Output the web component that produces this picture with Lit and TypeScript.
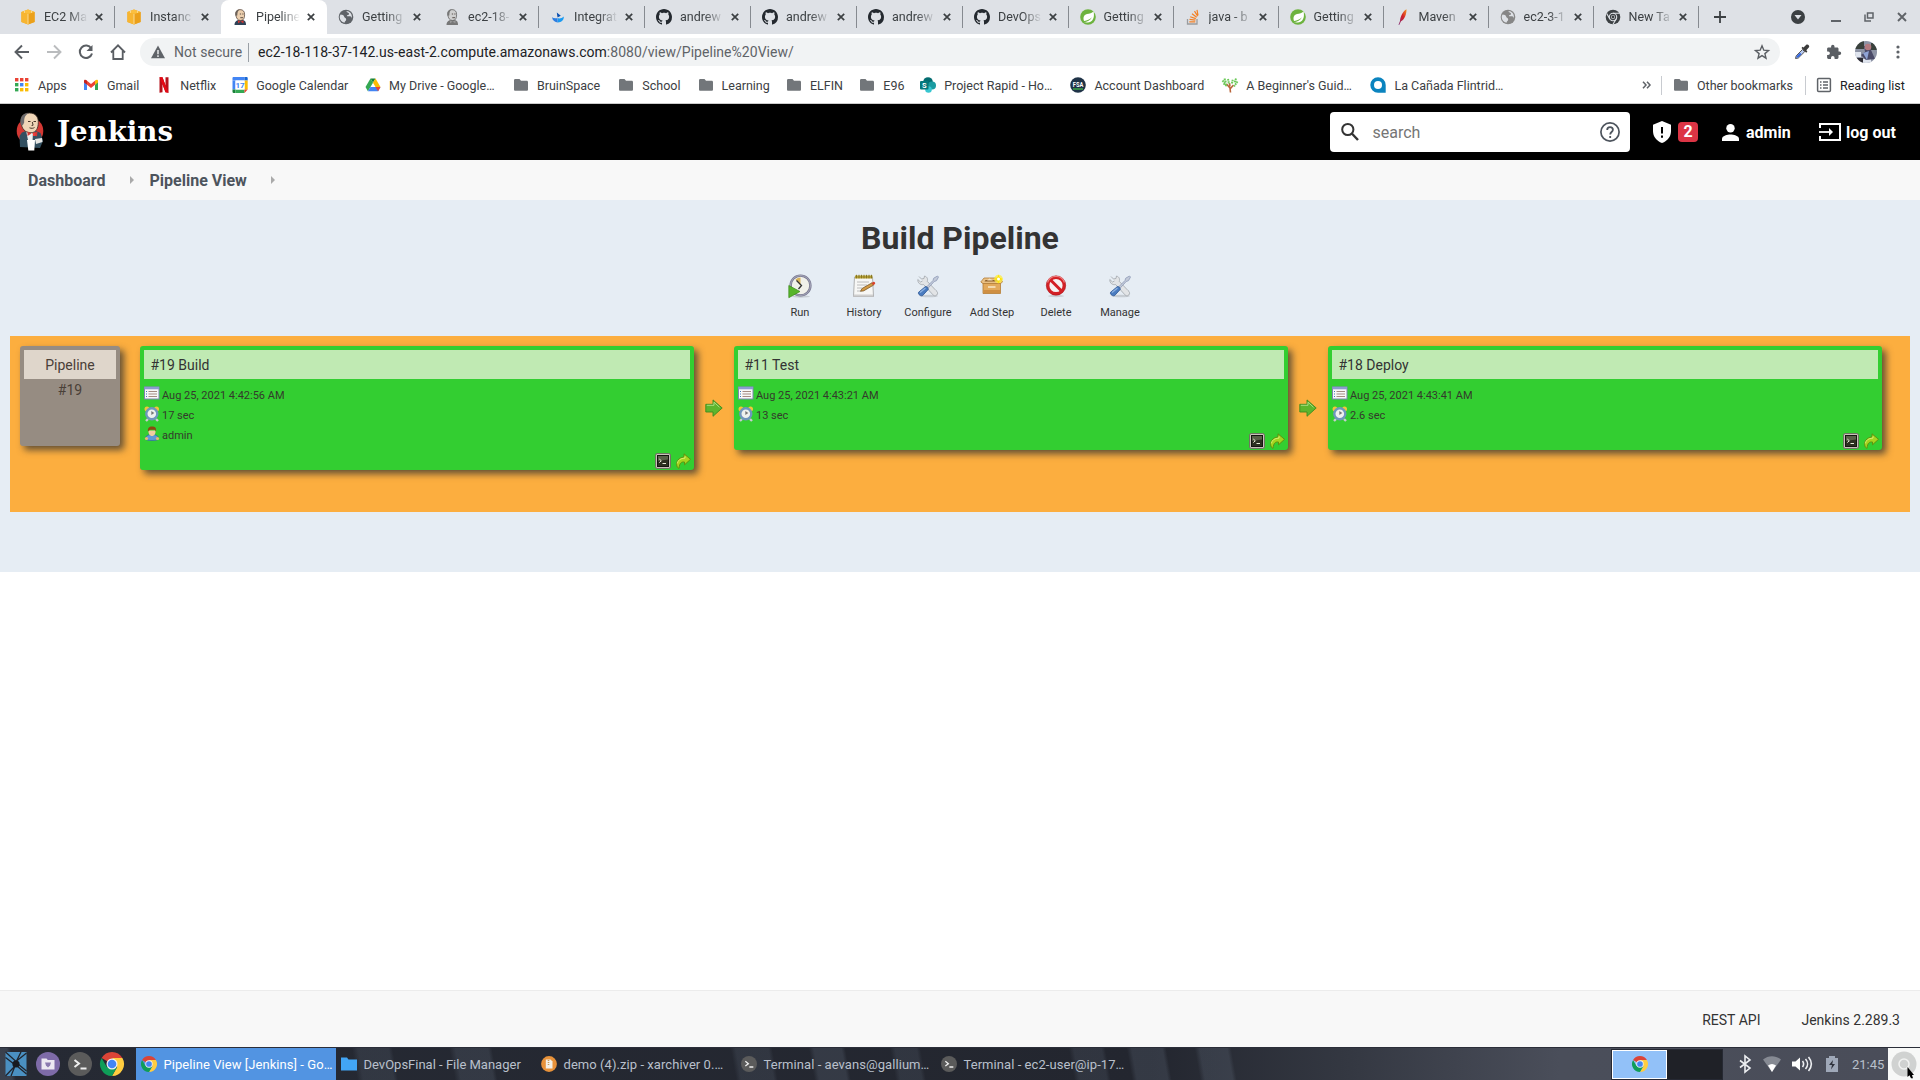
import { LitElement, html, svg, css, nothing } from "lit";
import { customElement } from "lit/decorators.js";
import { styleMap } from "lit/directives/style-map.js";

const icon = (w: number, h: number, body: unknown, vb = `0 0 ${w} ${h}`) =>
  html`<svg class="ico" width=${w} height=${h} viewBox=${vb}>${body}</svg>`;

/* ---------- shared glyphs ---------- */
const aws = () => icon(16, 16, svg`
  <path d="M8 .5 14.6 3v10L8 15.5 1.4 13V3z" fill="#f0a722"/>
  <path d="M1.4 3 8 5v10.5L1.4 13z" fill="#f7b531"/><path d="M14.6 3 8 5v10.5l6.600-2.500z" fill="#eba01a"/>
  <path d="M8 .5 14.600 3 8 5 1.400 3z" fill="#fbbf3f"/><path d="M8 5v10.500" stroke="#fbe0a0" stroke-width=".9"/>
  <path d="M4.500 1.900v2" stroke="#fbe0a0" stroke-width=".8"/><path d="M11.500 1.900v2" stroke="#fbe0a0" stroke-width=".8"/>`);

const butler = (gray = false) => icon(16, 16, svg`
  <path d="M2.500 16c0-2 .5-4 3.500-5l5 0c2.500.8 3 2.500 3 5z" fill=${gray ? "#777" : "#2f4256"}/>
  <path d="M3.800 6C3.300 2.500 5 .6 8 .6c3.200 0 4.800 2 4.600 5.200-.1 3-.8 5.700-3.900 5.700C5.500 11.500 4.300 9 3.800 6z" fill=${gray ? "#cfcfcf" : "#eccfae"} stroke=${gray ? "#555" : "#4a3b33"} stroke-width=".7"/>
  <path d="M3.600 6.800C2.800 3 4.300.6 7.800.5 5.800 1.800 5.300 3.500 5.300 6.500z" fill=${gray ? "#777" : "#6c625a"}/>
  <path d="M7.800 5h1.300M10.300 5h1.200M8.300 8.700h2.700" stroke="#3a302b" stroke-width=".8"/>
  <path d="m6 11.300 2.500 1.500-2.500 1.500zM11.500 11.300 8.500 12.800l3 1.500z" fill=${gray ? "#999" : "#d33833"}/>`);

const globe = (c = "#5f6368") => icon(16, 16, svg`
  <circle cx="8" cy="8" r="7.300" fill=${c}/>
  <path d="M2.600 5.500c2 .2 3.200.7 3.600 2.300.4 1.300 2 1 2 2.600 0 1.500-1.500 1.500-1.700 3.300-2.800-.6-4.800-3-4.800-5.700 0-.9.3-1.800.9-2.500zM8.500 2c0 1.700 2.500 1.200 2.500 2.900 0 1.300-2 .8-2.200 2 .8 1 3.200-.2 4.400 1.100.5.600.5 1.500.2 2.300.8-1.900.7-4.400-.8-6.200A6 6 0 0 0 8.500 2z" fill="#dee1e6"/>`);

const swallow = () => icon(16, 16, svg`
  <path d="M2 8.200c1.500 1.200 3.500 1.500 5.500.8L7.800 13.500C5 13.300 2.500 11.500 2 8.200z" fill="#2d7de0"/>
  <path d="M7.800 9.300c2 .5 4.500-.2 6-1.800.2 3.500-2.300 5.800-6 6z" fill="#1b9af0"/>
  <path d="M6.800 3.500 10.800 6.800 7.500 8.600z" fill="#0a4fb0"/>`);

const github = () => icon(16, 16, svg`
  <path fill="#24292f" d="M8 0C3.580 0 0 3.580 0 8c0 3.540 2.290 6.530 5.470 7.590.4.070.55-.17.55-.38 0-.19-.01-.82-.01-1.490-2.010.37-2.530-.49-2.690-.94-.09-.23-.48-.94-.82-1.130-.28-.15-.68-.52-.01-.53.63-.01 1.080.58 1.230.82.72 1.210 1.870.87 2.330.66.070-.52.28-.87.51-1.070-1.780-.2-3.640-.89-3.640-3.950 0-.87.310-1.590.82-2.150-.08-.2-.36-1.020.08-2.120 0 0 .67-.21 2.200.82.64-.18 1.320-.27 2-.27s1.360.09 2 .27c1.530-1.040 2.200-.82 2.200-.82.44 1.100.16 1.920.08 2.120.51.56.82 1.270.82 2.150 0 3.070-1.870 3.750-3.650 3.950.29.25.54.73.54 1.480 0 1.070-.01 1.930-.01 2.200 0 .21.15.46.55.38A8.010 8.010 0 0 0 16 8c0-4.420-3.580-8-8-8z"/>`);

const spring = () => icon(16, 16, svg`
  <circle cx="8" cy="8" r="7.800" fill="#6db33f"/>
  <path d="M13.500 2.200c.9 3.500.6 7.600-1.900 9.800-2 1.700-5 1.600-7.800 1.300 3.500-.6 6.600-1.800 8.200-5-2.400 2.400-4.700 3-7.900 3.700C2.800 9 3.600 6 7 5c2.400-.7 5-.6 6.500-2.800z" fill="#fff"/>`);

const stack = () => icon(16, 16, svg`
  <path d="M2.500 10v5h9.500v-5" fill="none" stroke="#9a9c9f" stroke-width="1.300"/>
  <path d="M4.300 12.800h6M4.500 10.400l5.900.7M5.200 7.700l5.600 1.900M7 4.700l4.700 3.600M9.500 2.200l3.200 4.900M12 .8l1 5.600" stroke="#f48024" stroke-width="1.200"/>`);

const feather = () => icon(16, 16, svg`
  <defs><linearGradient id="fe" x1="1" y1="0" x2="0" y2="1"><stop offset="0" stop-color="#f69923"/><stop offset=".45" stop-color="#d22128"/><stop offset="1" stop-color="#7e2a76"/></linearGradient></defs>
  <path d="M11.500.3C8.300 1.500 5.200 8 5 12l-1.500 3.800.7.100L6 12.300c3.500-1.300 5.700-7.500 5.500-12z" fill="url(#fe)"/>`);

const chromeGray = () => icon(16, 16, svg`
  <circle cx="8" cy="8" r="7.300" fill="#3c4043"/><circle cx="8" cy="8" r="3.700" fill="#3c4043" stroke="#dee1e6" stroke-width="1.100"/>
  <path d="M8 4.300h6.700M4.800 9.900 1.700 4.500M11.200 9.900 8 15.200" stroke="#dee1e6" stroke-width="1.100"/><circle cx="8" cy="8" r="2" fill="#dee1e6"/><circle cx="8" cy="8" r="1.400" fill="#3c4043"/>`);

const chromeColor = (s: number) => icon(s, s, svg`
  <path d="M22.400 6A12 12 0 0 1 12 24l5.200-9L12 6z" fill="#ffcd40"/>
  <path d="M1.600 6A12 12 0 0 0 12 24l5-8.700L6.800 15z" fill="#0f9d58"/>
  <path d="M12 12 1.600 6A12 12 0 0 1 22.400 6H12z" fill="#db4437"/>
  <circle cx="12" cy="12" r="5.500" fill="#f1f1f1"/><circle cx="12" cy="12" r="4.300" fill="#4285f4"/>`, "0 0 24 24");

const folder = () => icon(16, 16, svg`
  <path d="M1 3.300C1 2.600 1.500 2 2.300 2h4.200l1.500 1.800h5.700c.8 0 1.300.6 1.300 1.300v7.300c0 .8-.5 1.400-1.300 1.400H2.300c-.8 0-1.300-.6-1.300-1.400z" fill="#72767a"/>`);

const xMark = (s = 8, w = 1.700, c = "#3c4043") => icon(s, s, svg`<path d="M.8.8 7.200 7.200M7.200.8.8 7.200" stroke=${c} stroke-width=${w}/>`, "0 0 8 8");

const tabs = [
  { i: aws, t: "EC2 Ma" }, { i: aws, t: "Instanc" },
  { i: () => butler(), t: "Pipeline" }, { i: () => globe(), t: "Getting" },
  { i: () => butler(true), t: "ec2-18-" }, { i: swallow, t: "Integrat" },
  { i: github, t: "andrew" }, { i: github, t: "andrew" }, { i: github, t: "andrew" },
  { i: github, t: "DevOps" }, { i: spring, t: "Getting" }, { i: stack, t: "java - b" },
  { i: spring, t: "Getting" }, { i: feather, t: "Maven" }, { i: () => globe("#868686"), t: "ec2-3-1" },
  { i: chromeGray, t: "New Ta" },
];

/* ---------- bookmarks ---------- */
const appsIcon = () => icon(16, 16, ["#ea4335", "#ea4335", "#ea4335", "#34a853", "#4285f4", "#fbbc04", "#34a853", "#fbbc04", "#fbbc04"].map(
  (c, n) => svg`<rect x=${1 + (n % 3) * 5} y=${1 + Math.floor(n / 3) * 5} width="3.400" height="3.400" fill=${c}/>`));
const gmail = () => icon(16, 16, svg`
  <path d="M1 4v9h3V7.500z" fill="#4285f4"/><path d="M15 4v9h-3V7.500z" fill="#34a853"/>
  <path d="M4 3.800 8 7l4-3.200v4L8 11 4 7.800z" fill="#ea4335"/><path d="M1 4c0-1.300 1.500-1.700 3-.4v4.200L1 5.600z" fill="#c5221f"/><path d="M15 4c0-1.300-1.500-1.700-3-.4v4.200l3-2.200z" fill="#fbbc04"/>`);
const netflix = () => icon(16, 16, svg`<path d="M3.500.3h3l3 8.500V.3h3v15.400l-3-.4-3-8.400v8.400l-3 .4z" fill="#b5101a"/><path d="M3.500.3h3l6 15.400-3-.4z" fill="#e50914"/>`);
const gcal = () => icon(16, 16, svg`
  <path d="M1.500 0h11v3.500h-12V1.200C.5.500.9 0 1.500 0z" fill="#4285f4"/><path d="M.5 3.500h3v9h-3z" fill="#4285f4"/><path d="M12.500 0h2c.8 0 1.200.5 1.200 1.200v2.300h-3.200z" fill="#1967d2"/>
  <path d="M12.500 3.500h3.200v9h-3.200z" fill="#fbbc04"/><path d="M.5 12.500h3V16h-2C.9 16 .5 15.500.5 14.800z" fill="#188038"/><path d="M3.500 12.500h9V16h-9z" fill="#34a853"/><path d="M12.500 12.500h3.200L12.500 16z" fill="#ea4335"/>
  <path d="M3.500 3.500h9v9h-9z" fill="#fff"/><text x="8" y="11" font-size="8" font-weight="700" font-family="Roboto" text-anchor="middle" fill="#4285f4">17</text>`);
const drive = () => icon(16, 16, svg`
  <path d="M5.500 1.500h5L8 5.800z" fill="#188038"/><path d="M5.500 1.500.5 10l2.400 4.300L8 5.800z" fill="#34a853"/>
  <path d="M10.500 1.500l5 8.500h-5L8 5.800z" fill="#fbbc04"/><path d="M2.900 14.300 5.400 10h10.100l-2.400 4.300z" fill="#4285f4"/><path d="m10.500 10 2.600 4.300L15.500 10z" fill="#ea4335"/>`);
const sharepoint = () => icon(16, 16, svg`
  <circle cx="8" cy="5" r="4.800" fill="#036c70"/><circle cx="12" cy="8.500" r="4" fill="#1a9ba1"/><circle cx="8.500" cy="12.500" r="3.300" fill="#37c6d0"/>
  <rect x="0" y="4" width="8.500" height="8.500" rx="1" fill="#03787c"/><text x="4.200" y="11" font-size="7.500" font-weight="700" font-family="Roboto" text-anchor="middle" fill="#fff">S</text>`);
const fsa = () => icon(16, 16, svg`<circle cx="8" cy="8" r="7.800" fill="#1f3347"/><path d="M3 12h10" stroke="#3fae49" stroke-width="1.400"/><text x="8" y="10" font-size="6.500" font-weight="700" font-family="Roboto" text-anchor="middle" textLength="10.500" lengthAdjust="spacingAndGlyphs" fill="#fff">FSA</text>`);
const tree = () => icon(16, 16, svg`
  <path d="M8.500 15.500 8 11 4.500 7M8 12 11.500 8M8 9.500 7.500 6" stroke="#b9653b" stroke-width="1.600" fill="none"/>
  <path d="M2.500 1.500 4 6M.5 3.500l3.500 4M6 2l1 5M9.800 6.500 11 2M14 1.500 12.500 6M15.500 4.500l-3.500 5M1.500 6.500l3.500 2.500" stroke="#6cc95a" stroke-width="2" stroke-dasharray="1.700 .6" fill="none"/>`);
const canada = () => icon(16, 16, svg`<path d="M8 .3a7.700 7.700 0 0 1 7.700 7.700v7.700H8A7.700 7.700 0 0 1 8 .3z" fill="#0b84bf"/><path d="M8 4a3.600 3.600 0 1 1 0 8 3.600 3.600 0 0 1 0-8z" fill="#fff"/>`);
const reading = () => icon(16, 16, svg`<rect x="1.600" y="1.600" width="12.800" height="12.800" rx="1" fill="none" stroke="#5f6368" stroke-width="1.500"/><path d="M4 5h1.500M4 8h1.500M4 11h1.500M7 5h5M7 8h5M7 11h5" stroke="#5f6368" stroke-width="1.400"/>`);

/* x width of each label keeps the bar's rhythm independent of the text engine */
const bookmarks: [() => unknown, string, number][] = [
  [appsIcon, "Apps", 28.500], [gmail, "Gmail", 33], [netflix, "Netflix", 35.500], [gcal, "Google Calendar", 92.500],
  [drive, "My Drive - Google…", 107.500], [folder, "BruinSpace", 65], [folder, "School", 38.800], [folder, "Learning", 48],
  [folder, "ELFIN", 33], [folder, "E96", 20.500], [sharepoint, "Project Rapid - Ho…", 109.800], [fsa, "Account Dashboard", 111.500],
  [tree, "A Beginner's Guid…", 107.800], [canada, "La Cañada Flintrid…", 110],
];

/* ---------- jenkins toolbar ---------- */
const runI = () => icon(24, 24, svg`
  <ellipse cx="13" cy="22.500" rx="9" ry="1.200" fill="#0002"/>
  <circle cx="12.500" cy="11.500" r="9.900" fill="#f1f1ea" stroke="#77778f" stroke-width="2.400"/><circle cx="12.500" cy="11.500" r="10" fill="none" stroke="#b5b5c6" stroke-width=".8"/>
  <path d="M12.500 11.500 7.500 5.500a8 8 0 0 1 5-2z" fill="#d8b45a"/><path d="M8.500 6.500l5 5-3 3.500" fill="none" stroke="#333" stroke-width="1.300"/>
  <path d="M.8 11.500 12 17.500.8 23.700z" fill="#57b52a" stroke="#3c8c19" stroke-width=".7"/>`);
const histI = () => icon(24, 24, svg`
  <path d="M2.500 3h18l1 19.500h-20z" fill="#f7f7f5" stroke="#a0a0a0" stroke-width=".8"/><path d="M2 20.500h19v2H1.500z" fill="#cfcfcf"/>
  <path d="M3 1.500h17.500v3H3z" fill="#b7a135"/><path d="M4.500.8v3.500M7 .8v3.500M9.500.8v3.500M12 .8v3.500M14.500.8v3.500M17 .8v3.500M19.500.8v3.500" stroke="#80701f" stroke-width=".9"/>
  <path d="M5 8h12M5 11h10M5 14h5M5 17h4" stroke="#bcbcbc" stroke-width="1"/><path d="m8.500 17.300 1.500-2.800 10-5.700 1.600 2.300-10 5.800z" fill="#d39a45" stroke="#6b4a1c" stroke-width=".7"/><path d="m19.500 9 2-1.200c1-.3 2.200 1.400 1.500 2.200l-1.700 1.200z" fill="#d8442c"/>`);
const toolI = () => icon(24, 24, svg`
  <ellipse cx="13" cy="22" rx="9" ry="1.300" fill="#0002"/>
  <path d="M3 2.500 5.500 5 8 4.500 8.500 2c3 .8 3.500 3.500 2.700 5.300L20 16.500c1.500 1 2.300 3 .8 4.500s-3.300.8-4.300-.7L7.500 10.500C4.500 11.300 1.500 9 1.800 5.500L4.500 8l2-1" fill="#e2e4e6" stroke="#a0a4a9" stroke-width=".8"/>
  <path d="m10 13.500 7-7 .7-2.300L21.500 2l1 1-2 3.700-2.300.8-6.700 7.300z" fill="#c3cad9" stroke="#8d99b6" stroke-width=".8"/>
  <path d="M9.500 12.500c1.500 0 3 1.500 2.700 3l-5.500 6c-1.500 1.200-5-1-4.200-3.200z" fill="#4a7cc0" stroke="#2c5592" stroke-width=".8"/><path d="M4 18.500 9.500 14" stroke="#8fb3e2" stroke-width="1.200"/>`);
const boxI = () => icon(24, 24, svg`
  <path d="M3 9h17.500v10.500H3z" fill="#e2a95c" stroke="#b37c36" stroke-width=".8"/><path d="M3.400 16h16.700v3.100H3.400z" fill="#cf8f42"/>
  <path d="M4 4h16l2.500 4-2 1.500H3L.8 8z" fill="#e9c084" stroke="#b37c36" stroke-width=".8"/><path d="M5.500 6h12l1 1.500H4.500z" fill="#8d5f2a"/><path d="M9.500 4.500 13 6.500H7z" fill="#f5e3c4"/><path d="M8 12h7.500v2H8z" fill="#f3d9ae"/>
  <circle cx="18.500" cy="5" r="4.300" fill="#ffec3d" opacity=".75"/><path d="m18.500 .5 1.200 3.300 3.300 1.200-3.300 1.200-1.200 3.300-1.200-3.300L14 5l3.300-1.200z" fill="#ffe600"/><circle cx="18.500" cy="5" r="1.500" fill="#fff"/>`);
const delI = () => icon(24, 24, svg`
  <ellipse cx="12" cy="22" rx="8" ry="1.200" fill="#0002"/><circle cx="12" cy="11.500" r="8.200" fill="#f5f3f3" stroke="#d32025" stroke-width="3.200"/><circle cx="12" cy="11.500" r="9.700" fill="none" stroke="#a31115" stroke-width=".5"/><path d="m6.300 5.700 11.500 11.500" stroke="#d32025" stroke-width="3"/><path d="M3.500 8.500A9 9 0 0 1 20.500 8.500" fill="none" stroke="#ec7c7e" stroke-width="1.300"/>`);
const actions: [() => unknown, string][] = [[runI, "Run"], [histI, "History"], [toolI, "Configure"], [boxI, "Add Step"], [delI, "Delete"], [toolI, "Manage"]];

/* ---------- build cards ---------- */
const dateI = () => icon(16, 16, svg`<rect x=".5" y="1" width="14.500" height="12" fill="#f8f8f8" stroke="#7e86b0"/><path d="M.5 .8h14.500v2.500H.5z" fill="#8c9bd0"/><path d="M2 5.500h1M2 8h1M2 10.500h1" stroke="#3c78b8"/><path d="M4.500 5.500H13M4.500 8H13M4.500 10.500H13" stroke="#a58b82"/>`);
const clockI = () => icon(16, 16, svg`
  <circle cx="3" cy="3" r="2.500" fill="#f3c53a"/><circle cx="12.500" cy="3" r="2.500" fill="#f3c53a"/><path d="m4 13-2 2M12 13l2 2" stroke="#c9ccd0" stroke-width="2.400"/>
  <circle cx="7.800" cy="7.800" r="5.500" fill="#eef1ee" stroke="#6f96bd" stroke-width="2.400"/><path d="M7.300 5v4l3-2z" fill="#777"/>`);
const userI = () => icon(16, 16, svg`
  <path d="M1.500 13c0-3 2-4 4-4.300h5c2 .3 4 1.300 4 4.300-1 2-12 2-13 0z" fill="#5f9ad8" stroke="#3465a4" stroke-width=".7"/><circle cx="2.500" cy="12.500" r="1.600" fill="#e9b96e"/><circle cx="13.500" cy="12.500" r="1.600" fill="#e9b96e"/>
  <path d="M4.500 4.500h7c.3 3-1 5.500-3.500 5.500S4.200 7.500 4.500 4.500z" fill="#f2cda0"/><path d="M4 5.500C3.500 2 5 .5 8 .5s4.600 1.300 4 5l-1.200-1.800H6z" fill="#8a4a12"/>`);
const termI = () => icon(16, 16, svg`<rect x=".6" y=".6" width="14.800" height="14.800" rx="1.500" fill="#d4ccc4" stroke="#6d6a5f" stroke-width="1"/><rect x="2.500" y="2.500" width="11" height="11" fill="#2c3020" stroke="#14160f"/><path d="M3 3h10v3.500L3 8z" fill="#596048"/><path d="m4.300 6 2 1.800-2 1.800M7.500 10.500h3.500" fill="none" stroke="#e8eed8"/>`);
const redoI = () => icon(16, 16, svg`<path d="M9 .8 15.500 6.300 9.500 11.800V9C6.500 8.500 4.500 10 4 15.300.5 14.500-.2 5 9 4z" fill="#a5d51f" stroke="#5c8c0e" stroke-width=".9"/><path d="M2.300 10.500C3 7 5.500 5.300 10 5.100V3.200" fill="none" stroke="#d6f06b" stroke-width="1"/>`);
const arrowI = () => icon(18, 18, svg`<path d="M.8 5.300h7.200V.9L17.200 9 8 17.300V13H.8z" fill="#5db52d" stroke="#3d8b1f" stroke-width=".9"/><path d="M1.800 6.300H9V3.200L14.500 8.300" fill="none" stroke="#a8dd80" stroke-width="1"/>`);

const builds = [
  { title: "#19 Build", date: "Aug 25, 2021 4:42:56 AM", dur: "17 sec", by: "admin" },
  { title: "#11 Test", date: "Aug 25, 2021 4:43:21 AM", dur: "13 sec", by: "" },
  { title: "#18 Deploy", date: "Aug 25, 2021 4:43:41 AM", dur: "2.6 sec", by: "" },
];

/* ---------- taskbar ---------- */
const promptI = (s: number) => icon(s, s, svg`<circle cx="12" cy="12" r="12" fill="#5b5b5b"/><path d="m6.500 8 4.500 3.500L6.500 15M12.500 16.500h6" fill="none" stroke="#eee" stroke-width="2"/>`, "0 0 24 24");
const blueFolder = () => icon(16, 16, svg`<path d="M0 1.500h6l1.500 2H16v11H0z" fill="#42a5f5"/>`);
const zipI = () => icon(16, 16, svg`<circle cx="8" cy="8" r="7.900" fill="#e8923a"/><path d="M4.800 3.500h4.700l2 2V12.500H4.800z" fill="#f4efe6"/><path d="M7.500 4v5" stroke="#c89a5a" stroke-dasharray="1 1" stroke-width="1.500"/>`);
const tasks: [() => unknown, string][] = [
  [() => chromeColor(16), "Pipeline View [Jenkins] - Go…"], [blueFolder, "DevOpsFinal - File Manager"], [zipI, "demo (4).zip - xarchiver 0.…"],
  [() => promptI(16), "Terminal - aevans@gallium…"], [() => promptI(16), "Terminal - ec2-user@ip-17…"],
];

@customElement("app-root")
export class AppRoot extends LitElement {
  static styles = css`
    :host { display: flex; flex-direction: column; width: 1920px; height: 1080px; overflow: hidden; background: #fff;
      font-family: Roboto, "Liberation Sans", sans-serif; color: #333; }
    * { box-sizing: border-box; }
    .ico { display: block; flex: none; overflow: visible; }
    .grow { flex: 1; }
    .row { display: flex; align-items: center; }
    .tabs { height: 34px; background: #dee1e6; padding-left: 8.500px; flex: none; }
    .tab { width: 106px; height: 34px; padding-left: 11.500px; border-right: 1px solid #868a90; border-image: linear-gradient(#dee1e6 7px, #868a90 7px, #868a90 27px, #dee1e6 27px) 1; border-width: 0 1px 0 0; }
    .tab.slim { width: 105px; padding-left: 11px; }
    .tab.plain { border-image: none; border-right-color: transparent; }
    .tab.active { border-image: none; border: 0; background: #fff; border-radius: 8px 8px 0 0; }
    .tab .lbl { width: 44px; margin: 0 6.500px 0 8px; font-size: 12.500px; line-height: 16px; color: #3c4043; white-space: nowrap;
      -webkit-mask-image: linear-gradient(90deg, #000 55%, transparent 100%); mask-image: linear-gradient(90deg, #000 55%, transparent 100%); }
    .plus { margin-left: 15px; }
    .win { gap: 23px; padding-right: 13px; }
    .win .ico:first-child { margin-right: 3px; }
    .nav { height: 36px; flex: none; padding-left: 14px; }
    .nav .left { gap: 16px; width: 126px; }
    .omni { width: 1640px; height: 28px; border-radius: 14px; background: #f1f3f4; padding: 0 10px 0 11px; font-size: 14px; }
    .omni .ns { color: #5f6368; margin-left: 9px; width: 67px; letter-spacing: .05px; white-space: nowrap; }
    .omni .bar { width: 1px; height: 19px; background: #9aa0a6; margin: 0 9px 0 7px; }
    .url { color: #202124; letter-spacing: .035px; } .url i { font-style: normal; color: #5f6368; }
    .ext { padding-left: 14px; }
    .marks { height: 33px; flex: none; padding-left: 14px; padding-bottom: 3px; font-size: 12.500px; color: #3c4043; }
    .mark { margin-right: 16.400px; gap: 8px; }
    .mark span { white-space: nowrap; }
    .vsep { width: 1px; height: 19px; background: #c8cbd0; }
    .head { height: 57px; flex: none; background: #000; border-top: 1px solid #ccc; padding-left: 15px; color: #fff; font-weight: 700; font-size: 16px; }
    .search { width: 300px; height: 40px; background: #fff; border-radius: 4px; padding: 0 10px; color: #757575; font-weight: 400; }
    .search .ph { flex: 1; margin-left: 12.500px; }
    .badge { width: 20px; height: 20px; border-radius: 4px; background: #dc3545; text-align: center; line-height: 20px; margin: 0 24px 0 7px; }
    .crumbs { height: 40px; flex: none; background: #f8f8f8; padding-left: 28px; color: #4d545d; font-weight: 700; font-size: 16px; }
    .tri { width: 0; height: 0; border: 4px solid transparent; border-left-color: #aaa; border-right: 0; }
    .view { height: 372px; flex: none; background: #e6edf4; padding: 0 10px; display: flex; flex-direction: column; }
    h1 { margin: 19px 0 0; font-size: 32px; line-height: 38px; text-align: center; font-weight: 700; }
    .acts { display: flex; justify-content: center; height: 79px; padding-top: 17px; }
    .act { width: 64px; display: flex; flex-direction: column; align-items: center; font-size: 11px; line-height: 14px; gap: 8px; }
    .pipe { height: 176px; background: #fcae3f; padding: 10px; display: flex; align-items: flex-start; }
    .box { border-radius: 3px; padding: 4px; box-shadow: 4px 4px 7px rgba(50,50,50,.75); color: #333; flex: none; }
    .rev { width: 100px; height: 100px; background: #968c82; text-align: center; font-size: 14px; margin-right: 20px; color: #4a4038; }
    .rev .ttl { background: #dfd6cb; }
    .ttl { height: 29px; line-height: 31px; font-size: 14px; }
    .num { line-height: 23px; }
    .build { width: 554px; height: 104px; background: #33ce31; display: flex; flex-direction: column; }
    .build.tall { height: 124px; }
    .build .ttl { background: #c0eab3; padding-left: 6.500px; margin-bottom: 7px; }
    .line { height: 20px; font-size: 11px; line-height: 20px; gap: 2px; display: flex; align-items: flex-start; color: #343a2c; }
    .tools { margin-top: auto; display: flex; justify-content: flex-end; gap: 4px; height: 16px; margin: auto -1px -3px 0; }
    .link { width: 40px; display: flex; justify-content: center; padding-top: 53px; }
    .foot { height: 57px; flex: none; border-top: 1px solid #ececec; background: #f8f8f8; justify-content: flex-end; gap: 41px; padding: 2px 20px 0 0; font-size: 14px; color: #333; }
    .task { height: 33px; flex: none; color: #b9c0cc; font-size: 13px; border-top: 1px solid #2b2e39;
      background: linear-gradient(80deg, rgba(130,145,165,.22) 0 12px, transparent 16px 352px, rgba(130,145,165,.14) 358px 388px, transparent 392px 448px, rgba(130,145,165,.16) 454px 486px, transparent 490px 725px, rgba(130,145,165,.14) 730px 762px, transparent 766px 802px, rgba(130,145,165,.18) 807px 834px, transparent 838px 882px, rgba(130,145,165,.14) 887px 908px, transparent 912px 1058px, rgba(130,145,165,.14) 1063px 1090px, transparent 1094px 1115px, rgba(130,145,165,.18) 1120px 1150px, transparent 1154px 1182px, rgba(130,145,165,.18) 1187px 1214px, transparent 1218px), linear-gradient(90deg, #262a34 0, #23262f 1150px, #343842 1350px, #4a4e5a 1560px, #4a4d59 100%); }
    .launch { width: 136px; gap: 8px; padding-left: 4px; }
    .tk { width: 200px; height: 32px; padding-left: 5px; gap: 6.500px; white-space: nowrap; }
    .tk.on, .tk.wide { letter-spacing: .06px; }
    .tk.on { background: #5294e2; color: #fff; }
    .pager { width: 112px; height: 31px; background: #1f2127; border: 1px solid #262933; margin-right: 15px; }
    .pg { width: 55px; height: 29px; background: #92c1f8; border: 1px solid #fff; display: flex; align-items: center; justify-content: center; }
    .tray { gap: 11px; }
    .clock { width: 36px; white-space: nowrap; }
    .corner { width: 32px; height: 32px; background: #f7f8f7; }
  `;

  render() {
    return html`
      <div class="row tabs">
        ${tabs.map((t, n) => html`<div class="row tab ${n === 2 ? "active" : n === 1 || n === 3 ? "plain" : n > 9 ? "slim" : ""}">${t.i()}<span class="lbl">${t.t}</span>${xMark()}</div>`)}
        <span class="plus">${icon(12, 12, svg`<path d="M6 0v12M0 6h12" stroke="#3c4043" stroke-width="1.800"/>`)}</span>
        <span class="grow"></span>
        <div class="row win">
          ${icon(14, 14, svg`<circle cx="7" cy="7" r="7" fill="#3c4043"/><path d="M3.500 5h7L7 9.500z" fill="#dee1e6"/>`)}
          ${icon(10, 10, svg`<path d="M0 9h10" stroke="#5f6368" stroke-width="2"/>`)}
          ${icon(10, 10, svg`<path d="M3.500 1h5.500v5H3.500zM1 2.500v6.500h6" fill="none" stroke="#5f6368" stroke-width="1.500"/>`)}
          ${xMark(10, 1.500, "#5f6368")}
        </div>
      </div>
      <div class="row nav">
        <div class="row left">
          ${icon(16, 16, svg`<path d="M15 8H2M8 1.500 1.500 8 8 14.500" fill="none" stroke="#5a5e63" stroke-width="1.900"/>`)}
          ${icon(16, 16, svg`<path d="M1 8h13M8 1.500 14.500 8 8 14.500" fill="none" stroke="#babcbe" stroke-width="1.900"/>`)}
          ${icon(16, 16, svg`<path d="M13.300 4.500A6.200 6.200 0 1 0 14 9.500" fill="none" stroke="#5a5e63" stroke-width="2"/><path d="M14.500 1v6h-6z" fill="#5a5e63"/>`)}
          ${icon(16, 16, svg`<path d="M1 8.500 8 1.300l7 7.200M3.300 7v8h9.400V7" fill="none" stroke="#5a5e63" stroke-width="1.800"/>`)}
        </div>
        <div class="row omni">
          ${icon(14, 14, svg`<path d="M7 .5 14 13.300H0z" fill="#5f6368"/><path d="M7 5v4.300M7 10.300v1.600" stroke="#f1f3f4" stroke-width="1.400"/>`)}
          <span class="ns">Not secure</span><span class="bar"></span>
          <span class="url">ec2-18-118-37-142.us-east-2.compute.amazonaws.com<i>:8080/view/Pipeline%20View/</i></span>
          <span class="grow"></span>
          ${icon(16, 16, svg`<path d="m8 1.800 1.800 4.400 4.700.4-3.600 3 1.100 4.600L8 11.700l-4 2.500 1.100-4.600-3.600-3 4.700-.4z" fill="none" stroke="#5a5e63" stroke-width="1.400"/>`)}
        </div>
        <div class="row ext">
          ${icon(16, 16, svg`<path d="m1.500 14.500.7-2.700L8.500 5.500l2.200 2.200L4.300 14z" fill="#b7c9ee" stroke="#555"/><path d="m2 13.800 1-2 3-3 1.500 1.500L4.500 13.300z" fill="#3567e0"/><path d="m7.500 4 4.700 4.700 1.200-1.200-1.100-1.300 2.700-3c1-1.500-1.200-3.500-2.700-2.500L9.500 3.500 8.500 2.800z" fill="#3b3b3b"/>`)}
          <span style="width:16px"></span>
          ${icon(16, 16, svg`<path d="M13.500 7.500h-1V4.800c0-.7-.6-1.300-1.300-1.300H8.500v-1a1.700 1.700 0 0 0-3.400 0v1H2.400c-.7 0-1.300.6-1.300 1.300v2.600h1a1.800 1.800 0 0 1 0 3.600h-1v2.600c0 .7.6 1.300 1.300 1.300H5v-1a1.800 1.800 0 0 1 3.600 0v1h2.600c.7 0 1.300-.6 1.300-1.300v-2.700h1a1.700 1.700 0 0 0 0-3.400z" fill="#5a5e63"/>`)}
          <span style="width:13px"></span>
          ${icon(22, 26, svg`<defs><clipPath id="av"><circle cx="11" cy="11" r="11"/></clipPath></defs><g clip-path="url(#av)" transform="translate(0 2)"><path d="M0 0h22v22H0z" fill="#8d93a5"/><path d="M0 0h9v8H0zM16 2h6v7h-6z" fill="#39413c"/><path d="M0 11h6v5H0zM8 18h8v4H8z" fill="#dfe4ee"/><path d="M9 5h6l1 4 4 9-9 1-5-5 4-3z" fill="#4b4b68"/><circle cx="13" cy="6" r="3.300" fill="#b27a80"/><path d="m8 12 6-2-2 9z" fill="#8fa3d6"/><path d="M0 17h8v5H0z" fill="#2e2d35"/></g>`)}
          <span style="width:19px"></span>
          ${icon(4, 16, svg`<circle cx="2" cy="3" r="1.600" fill="#5f6368"/><circle cx="2" cy="8" r="1.600" fill="#5f6368"/><circle cx="2" cy="13" r="1.600" fill="#5f6368"/>`)}
        </div>
      </div>
      <div class="row marks">
        ${bookmarks.map(([i, t, w]) => html`<div class="row mark">${i()}<span style=${styleMap({ width: `${w}px` })}>${t}</span></div>`)}
        <span class="grow"></span>
        ${icon(9, 8, svg`<path d="m1 .8 3 3.200-3 3.200M5 .8 8 4 5 7.200" fill="none" stroke="#5f6368" stroke-width="1.500"/>`)}
        <span class="vsep" style="margin:0 11px 0 10px"></span>
        <div class="row mark" style="margin:0">${folder()}<span style="width:98px">Other bookmarks</span></div>
        <span class="vsep" style="margin:0 10px"></span>
        <div class="row mark" style="margin:0 13px 0 0;color:#202124">${reading()}<span style="width:67px">Reading list</span></div>
      </div>

      <div class="row head">
        ${icon(30, 40, svg`
          <circle cx="15" cy="19" r="13.300" fill="#d33833"/>
          <path d="M5 35 4.500 24 7 20.500l5-2h8l5.500 2.500 2.500 8-3 7z" fill="#335061"/><path d="M11 18.500h7l-.5 12h-4z" fill="#f0f0ee"/>
          <path d="M6 11C5 4.500 8.500 1 14.500 1c6 0 9 4 8.800 9.500-.1 5.500-2 10.200-7.300 10.200C10 20.700 7 17 6 11z" fill="#f0d6b7" stroke="#3a2d26" stroke-width=".8"/>
          <path d="M5.800 12.500C4.500 5 8 1 14 1c-4 2-5 5-4.800 9.500l-1.500 3z" fill="#6d6b6d"/><path d="M13 9.500h2.500M18.500 9.500H21M17.300 10l.8 3.200-1.500.3M14.500 15.800c2 .8 3.700.6 5-.3" fill="none" stroke="#49372a" stroke-width="1"/>
          <path d="m12.500 19.500 4 2-4 2.500zM22.500 19.500l-5.500 2 5 3z" fill="#d33833"/><path d="M18 20.500h2.500v3.500H18z" fill="#ef3d3a"/>
          <path d="M12 28h8l-.7 10.500h-6z" fill="#fff"/><path d="M20 27l7-1 .5 4-6.500 2z" fill="#e6e6e3"/>`)}
        ${html`<svg class="ico" width="130" height="40" viewBox="0 0 130 40"><text x="12" y="28.600" font-size="27" font-weight="700" font-family="DejaVu Serif Condensed, DejaVu Serif, serif" fill="#fff" textLength="116" lengthAdjust="spacingAndGlyphs">Jenkins</text></svg>`}
        <span class="grow"></span>
        <div class="row search">
          ${icon(20, 20, svg`<circle cx="7.800" cy="7.500" r="5.600" fill="none" stroke="#333" stroke-width="2"/><path d="m11.800 11.500 6.200 6.500" stroke="#333" stroke-width="2.400"/>`)}
          <span class="ph">search</span>
          ${icon(20, 20, svg`<circle cx="10" cy="10" r="9.100" fill="none" stroke="#4d545d" stroke-width="1.700"/><path d="M7.200 8c0-3.800 5.700-3.600 5.700-.2 0 2.200-2.700 2.300-2.700 4.600M10.200 14v1.900" fill="none" stroke="#4d545d" stroke-width="1.800"/>`)}
        </div>
        <span style="width:23px"></span>
        ${icon(18, 22, svg`<path d="M9 0 18 3.700V10c0 5.500-3.500 10-9 12-5.500-2-9-6.500-9-12V3.700z" fill="#fff"/><path d="M9 6v6.500M9 14.500v2.200" stroke="#000" stroke-width="2"/>`)}
        <span class="badge">2</span>
        ${icon(17, 17, svg`<circle cx="8.500" cy="4.200" r="4.200" fill="#fff"/><path d="M0 17v-2.300c0-2.800 5.500-4.200 8.500-4.200s8.500 1.400 8.500 4.200V17z" fill="#fff"/>`)}
        <span style="width:80px;padding-left:7px">admin</span>
        ${icon(22, 18, svg`<path d="M1 5V1h20v16H1v-4" fill="none" stroke="#fff" stroke-width="2"/><path d="M0 9h12" stroke="#fff" stroke-width="1.800"/><path d="m10 5 4 4-4 4z" fill="#fff"/>`)}
        <span style="width:79px;padding-left:5px">log out</span>
      </div>
      <div class="row crumbs">
        <span style="width:102px">Dashboard</span><span class="tri"></span><span style="width:137px;padding-left:15.500px;white-space:nowrap">Pipeline View</span><span class="tri"></span>
      </div>

      <div class="view">
        <h1>Build Pipeline</h1>
        <div class="acts">${actions.map(([i, t]) => html`<div class="act">${i()}<span>${t}</span></div>`)}</div>
        <div class="pipe">
          <div class="box rev"><div class="ttl">Pipeline</div><div class="num">#19</div></div>
          ${builds.map((b, n) => html`
            ${n ? html`<div class="link">${arrowI()}</div>` : nothing}
            <div class="box build ${b.by ? "tall" : ""}">
              <div class="ttl">${b.title}</div>
              <div class="line">${dateI()}<span>${b.date}</span></div>
              <div class="line">${clockI()}<span>${b.dur}</span></div>
              ${b.by ? html`<div class="line">${userI()}<span>${b.by}</span></div>` : nothing}
              <div class="tools">${termI()}${redoI()}</div>
            </div>`)}
        </div>
      </div>
      <div class="grow"></div>
      <div class="row foot"><span>REST API</span><span>Jenkins 2.289.3</span></div>

      <div class="row task">
        <div class="row launch">
          ${icon(24, 24, svg`<path d="M1.500 0h21v24h-21z" fill="#4a90c2"/><path d="M1.500 0 12 9.500 22.500 1M1.500 24 11 14M22.500 22 13 14M1.500 5.500 10 12M22.500 19 14 12M12 10 17 0M11 14 7 24" fill="none" stroke="#20242d" stroke-width="1.300"/><circle cx="12" cy="12" r="3.600" fill="#171a20"/>`)}
          ${icon(24, 24, svg`<circle cx="12" cy="12" r="12" fill="#7e6ba8"/><path d="M5.500 6.500h5l1.300 1.500h6.700v9.500h-13z" fill="#ece8f2"/><path d="M9 10.500h6l-1 3-2 2-2-2z" fill="#8b7ab0"/>`)}
          ${promptI(24)}
          ${chromeColor(24)}
        </div>
        ${tasks.map(([i, t], n) => html`<div class="row tk ${n ? (n > 1 ? "wide" : "") : "on"}">${i()}<span>${t}</span></div>`)}
        <span class="grow"></span>
        <div class="row pager"><div class="pg">${chromeColor(16)}</div></div>
        <div class="row tray">
          ${icon(14, 18, svg`<path d="M2 5.500 12 13 7 17V1l5 4-10 7.500" fill="none" stroke="#eceef1" stroke-width="1.600"/>`)}
          ${icon(18, 16, svg`<path d="M0 3.500C5-1 13-1 18 3.500L9 16z" fill="#868a93"/><path d="M5 9.500c2.500-2 5.500-2 8 0L9 16z" fill="#fff"/>`)}
          ${icon(20, 16, svg`<path d="M0 5.500h3.500L8 1.500v13l-4.500-4H0z" fill="#fff"/><path d="M10.500 5c1.500 2 1.500 4 0 6M13.500 3c2.700 3 2.700 7 0 10M16.500 1c3.700 4.500 3.700 9.500 0 14" fill="none" stroke="#eceef1" stroke-width="1.600"/>`)}
          ${icon(18, 16, svg`<path d="M6 0h6v2h3v14H3V2h3z" fill="#9fa8b8"/><path d="m10 4-4 5h3l-1 4.500 4-5.500H9.300z" fill="#2e323c"/>`)}
          <span class="clock">21:45</span>
        </div>
        <div class="row corner">${icon(32, 32, svg`<circle cx="16" cy="16" r="12.500" fill="#d0d2d1"/><circle cx="16" cy="16" r="5" fill="none" stroke="#f2f3f2" stroke-width="1.500"/><path d="M19.500 19v10l2-1.700 1.500 3h2l-1-3.300h2z" fill="#000"/>`)}</div>
      </div>
    `;
  }
}
